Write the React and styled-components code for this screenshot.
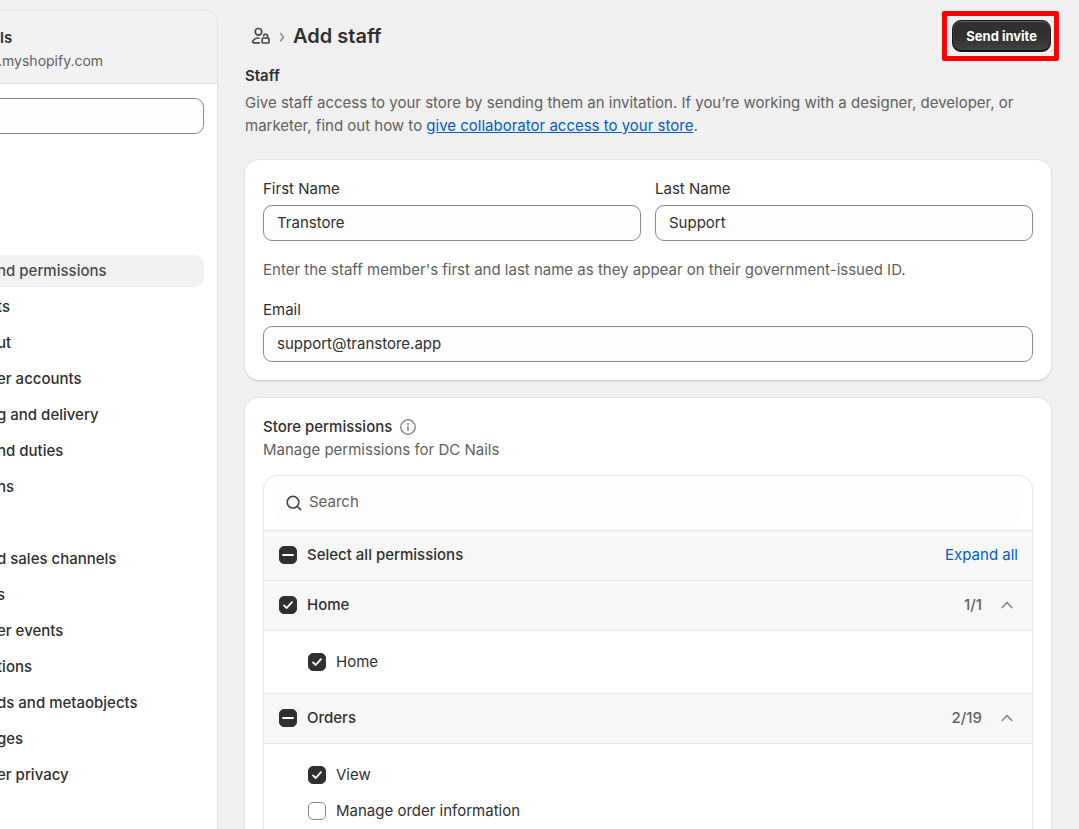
import React, { useEffect, useRef, useState } from "react";
import styled, { createGlobalStyle, css } from "styled-components";

const color = {
  page: "#f0f0f0",
  text: "#303030",
  muted: "#616161",
  icon: "#4a4a4a",
  link: "#005bd3",
  line: "#e6e6e6",
  field: "#8a8a8a",
  fieldBg: "#fdfdfd",
  subtle: "#f7f7f7",
};

const GlobalStyle = createGlobalStyle`
  * { box-sizing: border-box; }
  body {
    margin: 0;
    background: ${color.page};
    color: ${color.text};
    font-family: Inter, "Liberation Sans", sans-serif;
    font-size: 15px;
    line-height: 22px;
  }
  h1, h2, p, ul { margin: 0; padding: 0; }
  ul { list-style: none; }
  button, input { font: inherit; color: inherit; }
  svg { display: block; flex: none; }
`;

const Page = styled.div`
  display: grid;
  grid-template-columns: 218px minmax(0, 1fr);
  height: 100vh;
  overflow: hidden;
`;

const Sidebar = styled.aside`
  margin-top: 10px;
  background: #fff;
  border: 1px solid #e1e1e1;
  border-width: 1px 1px 0 0;
  border-radius: 0 14px 0 0;
  overflow: hidden;
`;

const StoreHeader = styled.div`
  height: 73px;
  padding-top: 16px;
  background: #f2f2f2;
  border-bottom: 1px solid #e1e1e1;
`;

const StoreName = styled.div`
  font-weight: 600;
`;

const StoreUrl = styled.div`
  color: ${color.muted};
  font-size: 14px;
  line-height: 24px;
  text-indent: -2px;
`;

const SidebarSearch = styled.input`
  display: block;
  width: calc(100% - 13px);
  height: 36px;
  margin: 14px 0 121px;
  border: 1px solid ${color.field};
  border-left: 0;
  border-radius: 0 9px 9px 0;
  background: ${color.fieldBg};
  outline: none;
`;

const NavList = styled.ul`
  display: flex;
  flex-direction: column;
  gap: 4px;
  padding-right: 13px;

  & + & { margin-top: 40px; }
`;

const NavLink = styled.a`
  display: block;
  height: 32px;
  line-height: 32px;
  text-indent: -3px;
  font-weight: 500;
  text-decoration: none;
  white-space: nowrap;
  color: ${(p) => (p.$active ? "#4a4a4a" : color.text)};
  background: ${(p) => (p.$active ? "#f2f2f2" : "transparent")};
  border-radius: 0 9px 9px 0;
`;

const Main = styled.main`
  padding: 20px 28px 0 27px;
  overflow: hidden;
`;

const Header = styled.header`
  display: flex;
  justify-content: space-between;
  align-items: center;
  height: 32px;
`;

const Crumbs = styled.div`
  display: flex;
  align-items: center;
  gap: 8px;
  padding-left: 5px;
`;

const Title = styled.h1`
  font-size: 20px;
  line-height: 32px;
  font-weight: 600;
`;

const Highlight = styled.div`
  position: relative;

  &::after {
    content: "";
    position: absolute;
    inset: -9px -8px -9px -10px;
    border: 5px solid #f00;
    border-radius: 2px;
    pointer-events: none;
  }
`;

const PrimaryButton = styled.button`
  display: block;
  height: 32px;
  padding: 0 13px;
  border: 1px solid #1a1a1a;
  border-radius: 9px;
  background: linear-gradient(#303030 50%, #444);
  box-shadow: inset 0 1px 0 #5c5c5c, inset 0 -1px 0 #111, inset 1px 0 0 #3c3c3c, inset -1px 0 0 #3c3c3c;
  color: #fff;
  font-size: 13px;
  font-weight: 700;
  line-height: 22px;
  white-space: nowrap;
`;

const SectionTitle = styled.h2`
  font-size: 15px;
  line-height: 24px;
  font-weight: 600;
  margin: 12px 0 3px;
`;

const Intro = styled.p`
  max-width: 770px;
  color: ${color.muted};
  line-height: 23px;
  margin-bottom: 23px;
`;

const TextLink = styled.a`
  color: ${color.link};
  text-decoration: ${(p) => (p.$plain ? "none" : "underline")};
`;

const Card = styled.section`
  padding: 18px;
  margin-bottom: 18px;
  background: #fff;
  border-radius: 14px;
  box-shadow: 0 1px 0 #cfcfcf, 0 0 1px 1px #e3e3e3, 0 2px 2px #e4e4e4;
`;

const FieldRow = styled.div`
  display: grid;
  grid-template-columns: 1fr 1fr;
  gap: 14px;
`;

const Field = styled.div`
  display: flex;
  flex-direction: column;
  gap: 5px;
`;

const TextInput = styled.input`
  width: 100%;
  height: 36px;
  padding: 0 13px 2px;
  border: 1px solid ${color.field};
  border-radius: 9px;
  background: ${color.fieldBg};
  outline: none;
`;

const Help = styled.p`
  margin: 18px 0;
  color: ${color.muted};
`;

const CardTitle = styled.h2`
  display: flex;
  align-items: center;
  gap: 8px;
  font-size: 15px;
  line-height: 22px;
  font-weight: 500;
`;

const CardNote = styled.p`
  color: ${color.muted};
  line-height: 23px;
  margin-bottom: 14px;
`;

const Panel = styled.div`
  border: 1px solid ${color.line};
  border-radius: 14px;
  overflow: hidden;
`;

const SearchBar = styled.label`
  display: flex;
  align-items: center;
  gap: 6px;
  height: 36px;
  margin: 9px;
  padding: 0 12px;
  border-radius: 9px;
  background: ${color.fieldBg};
`;

const SearchInput = styled.input`
  flex: 1;
  min-width: 0;
  padding: 0 0 2px;
  border: 0;
  background: transparent;
  outline: none;

  &::placeholder { color: ${color.muted}; opacity: 1; }
`;

const GroupRow = styled.div`
  display: flex;
  align-items: center;
  justify-content: space-between;
  height: 50px;
  padding: 0 14px 1px 15px;
  border-top: 1px solid ${color.line};
  background: ${color.subtle};
`;

const GroupEnd = styled.div`
  display: flex;
  align-items: center;
  gap: 14px;
  color: ${color.muted};
  font-size: 15px;
  font-weight: 500;
`;

const ToggleButton = styled.button`
  padding: 0;
  border: 0;
  background: none;
`;

const GroupItems = styled.div`
  padding: 13px 15px 13px 44px;
  border-top: 1px solid ${color.line};
`;

const CheckLabel = styled.label`
  display: flex;
  align-items: center;
  gap: 10px;
  min-height: 36px;
  font-weight: ${(p) => (p.$strong ? 500 : 400)};
`;

const CheckBox = styled.span`
  display: grid;
  place-items: center;

  & > * { grid-area: 1 / 1; }
  & > svg { pointer-events: none; }
`;

const filled = css`
  border-color: ${color.text};
  background: ${color.text};
`;

const CheckInput = styled.input`
  appearance: none;
  width: 18px;
  height: 18px;
  margin: 0;
  border: 1px solid ${color.field};
  border-radius: 5px;
  background: #fff;
  ${(p) => p.$filled && filled}
`;

function Check({ label, state, strong }) {
  const [value, setValue] = useState(state);
  const ref = useRef(null);
  useEffect(() => {
    ref.current.indeterminate = value === "mixed";
  }, [value]);
  return (
    <CheckLabel $strong={strong}>
      <CheckBox>
        <CheckInput
          ref={ref}
          type="checkbox"
          checked={value === "on"}
          $filled={value !== "off"}
          onChange={() => setValue(value === "on" ? "off" : "on")}
        />
        {value === "on" && (
          <svg width="18" height="18" viewBox="0 0 18 18" fill="none" stroke="#fff" strokeWidth="1.8" strokeLinecap="round" strokeLinejoin="round">
            <path d="M5 9.4 7.7 12 13 6.2" />
          </svg>
        )}
        {value === "mixed" && (
          <svg width="18" height="18" viewBox="0 0 18 18" stroke="#fff" strokeWidth="1.8" strokeLinecap="round">
            <path d="M4 9h10" />
          </svg>
        )}
      </CheckBox>
      {label}
    </CheckLabel>
  );
}

const StaffIcon = () => (
  <svg width="21" height="20" viewBox="0 0 21 20" fill="none" stroke={color.icon} strokeWidth="1.7" strokeLinecap="round" strokeLinejoin="round">
    <circle cx="8.5" cy="5.8" r="3.3" />
    <path d="M9.3 16.9H3.9c-1 0-1.5-.9-1.1-1.7 1-1.9 3-3.2 5.6-3.2h.6" />
    <rect x="12.2" y="12" width="6.8" height="5" rx="1" />
    <path d="M13.6 9.9a2 2 0 0 1 4 .7V12" />
  </svg>
);

const CrumbArrow = () => (
  <svg width="6" height="12" viewBox="0 0 6 12" fill="none" stroke="#8a8a8a" strokeWidth="1.5" strokeLinecap="round" strokeLinejoin="round">
    <path d="m1.5 3.4 3 3.8-3 3.8" />
  </svg>
);

const InfoIcon = () => (
  <svg width="16" height="16" viewBox="0 0 16 16" fill="none" stroke="#8a8a8a" strokeWidth="1.5" strokeLinecap="round">
    <circle cx="8" cy="8" r="7.2" />
    <path d="M8 7.5v4" />
    <circle cx="8" cy="4.8" r="1" fill="#8a8a8a" stroke="none" />
  </svg>
);

const SearchIcon = () => (
  <svg width="18" height="18" viewBox="0 0 18 18" fill="none" stroke={color.icon} strokeWidth="1.7" strokeLinecap="round">
    <circle cx="8" cy="8.2" r="5.8" />
    <path d="m12.3 12.5 3.2 3.1" />
  </svg>
);

const ChevronUp = () => (
  <svg width="22" height="22" viewBox="0 0 22 22" fill="none" stroke="#8a8a8a" strokeWidth="1.7" strokeLinecap="round" strokeLinejoin="round">
    <path d="m6.2 13.5 4.8-5 4.8 5" />
  </svg>
);

const navGroups = [
  ["nd permissions", "ts", "ut", "er accounts", "g and delivery", "nd duties", "ns"],
  ["d sales channels", "s", "er events", "tions", "ds and metaobjects", "ges", "er privacy"],
];

const groups = [
  { name: "Home", state: "on", count: "1/1", items: [["Home", "on"]] },
  { name: "Orders", state: "mixed", count: "2/19", items: [["View", "on"], ["Manage order information", "off"]] },
];

export default function App() {
  return (
    <>
      <GlobalStyle />
      <Page>
        <Sidebar>
          <StoreHeader>
            <StoreName>ls</StoreName>
            <StoreUrl>.myshopify.com</StoreUrl>
          </StoreHeader>
          <SidebarSearch type="text" aria-label="Search settings" />
          <nav>
            {navGroups.map((items, g) => (
              <NavList key={g}>
                {items.map((item, i) => (
                  <li key={item}>
                    <NavLink href="#" $active={g === 0 && i === 0}>{item}</NavLink>
                  </li>
                ))}
              </NavList>
            ))}
          </nav>
        </Sidebar>
        <Main>
          <Header>
            <Crumbs>
              <StaffIcon />
              <CrumbArrow />
              <Title>Add staff</Title>
            </Crumbs>
            <Highlight>
              <PrimaryButton type="button">Send invite</PrimaryButton>
            </Highlight>
          </Header>
          <SectionTitle>Staff</SectionTitle>
          <Intro>
            Give staff access to your store by sending them an invitation. If you’re working with a designer, developer, or
            marketer, find out how to <TextLink href="#">give collaborator access to your store</TextLink>.
          </Intro>
          <Card>
            <FieldRow>
              <Field>
                <label htmlFor="first">First Name</label>
                <TextInput id="first" type="text" defaultValue="Transtore" />
              </Field>
              <Field>
                <label htmlFor="last">Last Name</label>
                <TextInput id="last" type="text" defaultValue="Support" />
              </Field>
            </FieldRow>
            <Help>Enter the staff member's first and last name as they appear on their government-issued ID.</Help>
            <Field>
              <label htmlFor="email">Email</label>
              <TextInput id="email" type="email" defaultValue="support@transtore.app" />
            </Field>
          </Card>
          <Card>
            <CardTitle>
              Store permissions
              <InfoIcon />
            </CardTitle>
            <CardNote>Manage permissions for DC Nails</CardNote>
            <Panel>
              <SearchBar>
                <SearchIcon />
                <SearchInput type="text" placeholder="Search" aria-label="Search" />
              </SearchBar>
              <GroupRow>
                <Check label="Select all permissions" state="mixed" strong />
                <TextLink href="#" $plain>Expand all</TextLink>
              </GroupRow>
              {groups.map((group) => (
                <React.Fragment key={group.name}>
                  <GroupRow>
                    <Check label={group.name} state={group.state} strong />
                    <GroupEnd>
                      {group.count}
                      <ToggleButton type="button" aria-label={group.name}>
                        <ChevronUp />
                      </ToggleButton>
                    </GroupEnd>
                  </GroupRow>
                  <GroupItems>
                    {group.items.map(([label, state]) => (
                      <Check key={label} label={label} state={state} />
                    ))}
                  </GroupItems>
                </React.Fragment>
              ))}
            </Panel>
          </Card>
        </Main>
      </Page>
    </>
  );
}
